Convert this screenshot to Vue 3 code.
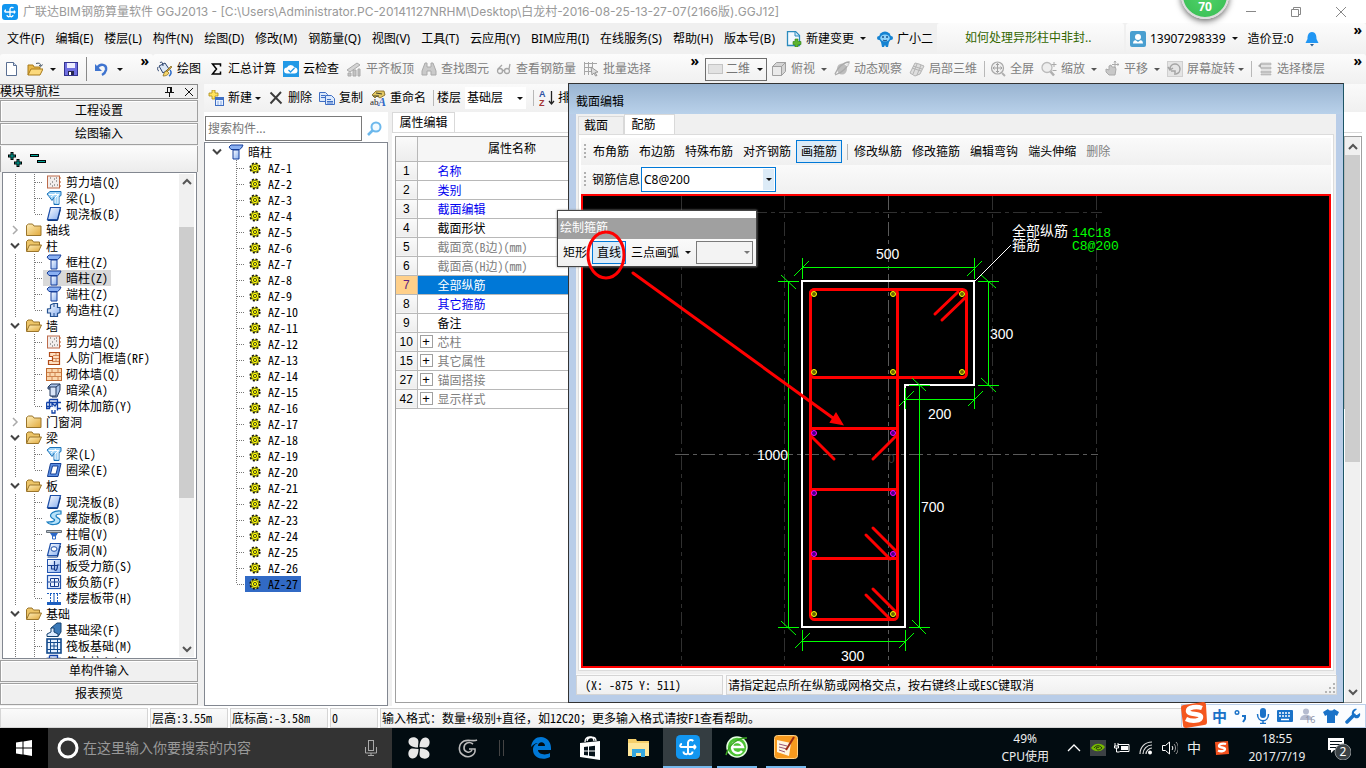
<script setup>
import { ref } from 'vue';

const icons = {
  app: '<rect width="16" height="16" rx="3" fill="#1296f0"/><path d="M8 12.500V5a2 2 0 0 1 3.500-1M3.500 8H13M3.500 8c-1 0-1-2 .5-2M12 6.500L13 8l-1 1.500M5 11c0 2 3 2.500 3 .5M8 11.500c0 2 3 1.500 3-.5" fill="none" stroke="#fff" stroke-width="1.300"/>',
  newDoc: '<path d="M2.500 1.500h7l3 3v10h-10z" fill="#fff" stroke="#5a6f92"/><path d="M9.500 1.500v3h3" fill="#cfdcf0" stroke="#5a6f92"/>',
  open: '<path d="M1 14V4h5l1 2h6v3" fill="#e8b84a" stroke="#a87a1a"/><path d="M1 14l3-6h12l-3 6z" fill="#fbd97c" stroke="#a87a1a"/><path d="M9 2.500c3-1 5 0 5 2.500m-2-1 2 1.500 1.500-2" fill="none" stroke="#456"/>',
  save: '<rect x="1.500" y="1.500" width="13" height="13" fill="#6f6fe0" stroke="#33338f"/><rect x="4" y="2" width="8" height="5" fill="#eef"/><rect x="5" y="10" width="6" height="4" fill="#26264e"/><rect x="6" y="11" width="2" height="3" fill="#fff"/>',
  undo: '<path d="M3 7c3-5 10-4 9 2-.5 2-2 4-4 5" fill="none" stroke="#3f74cf" stroke-width="2.500"/><path d="M1 3v7h7z" fill="#3f74cf"/>',
  paint: '<path d="M2 5l6-3 4 6-6 4z" fill="#dce7f5" stroke="#28406b"/><path d="M3 2c1-2 3-1 3 3M1 6c-1 2 0 4 1 4" fill="none" stroke="#28406b"/><path d="M14 5l1 1-6 6-1-1z" fill="#c7a13c" stroke="#775a10" stroke-width=".6"/><path d="M10 10c-2 0-3 2-4 5 3 0 5-1 6-3z" fill="#f6d76c" stroke="#836515" stroke-width=".7"/><path d="M13 9c2 2 1 5-1 6" fill="none" stroke="#2868c8" stroke-width="1.500"/>',
  sigma: '<path d="M12.500 5.500V3h-8l4 5-4 5h8v-2.500" fill="none" stroke="#000" stroke-width="1.500"/>',
  cloud: '<rect width="16" height="16" fill="#2299e6"/><path d="M4 12.500a3 3 0 0 1 0-6 4 4 0 0 1 7.500 0 3 3 0 0 1 0 6z" fill="#fff"/><path d="M5.500 9l2 2 4-4" fill="none" stroke="#2299e6" stroke-width="1.300"/>',
  align: '<path d="M1 9l10-7 3 2-10 7z" fill="#d4d4d4" stroke="#aaa"/><path d="M2 12h3v3H2zM7 9h3v6H7zM12 8h2v7h-2z" fill="#c4c4c4" stroke="#aaa"/>',
  binoc: '<path d="M4 2h2v4h4V2h2l3 8v4h-5v-4H6v4H1v-4z" fill="#cacaca" stroke="#aaa"/>',
  glasses: '<g fill="none" stroke="#a6a6a6" stroke-width="1.300"><circle cx="4" cy="10" r="2.500"/><circle cx="11" cy="10" r="2.500"/><path d="M6.500 9.500h2M2 8l4-4M13 8l1-5"/></g>',
  grid: '<path d="M1.500 1v13M5.500 1v13M9.500 1v6M1 2.500h13M1 6.500h8M1 10.500h7" stroke="#a6a6a6" fill="none"/><path d="M8 6l7 5-3 .5 2 3-1.500.5-1.500-3-2 2z" fill="#ddd" stroke="#999"/>',
  flat: '<rect x=".5" y="3.500" width="14" height="9" fill="#e2e2e2" stroke="#c4c4c4"/>',
  cube: '<path d="M1.500 5.500h9v9h-9z" fill="#eaeaea" stroke="#a0a0a0"/><path d="M1.500 5.500l4-4h9l-4 4zM10.500 5.500l4-4v9l-4 4z" fill="#d4d4d4" stroke="#a0a0a0"/>',
  orbit: '<ellipse cx="8" cy="8" rx="5" ry="5.500" fill="#bdbdbd"/><path d="M1 13C3 7 10 1 15 1c0 4-7 11-14 13" fill="none" stroke="#aaa" stroke-width="1.300"/><path d="M12 3l3-1-1 4" fill="#ddd"/>',
  local3d: '<path d="M6 2l4 1 5 2-4 8-5 2-5-3z" fill="#dedede" stroke="#b4b4b4"/><path d="M3 7l9 3M8 3L4 13M12 4L8 14M4 5l9 3" fill="none" stroke="#b4b4b4"/>',
  full: '<circle cx="7.500" cy="7" r="6" fill="#eee" stroke="#a8a8a8" stroke-width="1.200"/><path d="M7.500 2.500v9M3 7h9M6 4l1.500-1.500L9 4M6 10l1.500 1.500L9 10M4.500 5.500L3 7l1.500 1.500M10.500 5.500L12 7l-1.500 1.500" fill="none" stroke="#a0a0a0"/><path d="M12 12l3 3" stroke="#b0b0b0" stroke-width="2"/>',
  zoom: '<circle cx="6" cy="6.500" r="5" fill="#eee" stroke="#bbb" stroke-width="1.300"/><path d="M9.500 10.500l3.500 4" stroke="#b0b0b0" stroke-width="2.500"/><path d="M13 1v5M10.500 3.500h5M11.500 9.500h4" stroke="#aaa"/>',
  pan: '<path d="M2 8l3 1V5l2-1 1 2 3 0 1 2-1 6H5l-3-3z" fill="#c8c8c8" stroke="#aaa"/><path d="M11 0v7M8 3.500h7M10 1.500L11 0l1 1.500M13.500 2.500l1.500 1-1.500 1" fill="none" stroke="#aaa"/>',
  rotate: '<rect x=".5" y=".5" width="15" height="15" fill="#e4e4e4" stroke="#cfcfcf"/><path d="M3 8a5 5 0 1 1 6 5M1 6l2 3 3-2M4 10h4v4" fill="none" stroke="#a4a4a4" stroke-width="1.500"/>',
  floors: '<path d="M4 2h10v2H4zM4 6h10v2H4zM4 10h10v2H4zM4 13h10v1H4z" fill="#c8c8c8" stroke="#b4b4b4" stroke-width=".6"/><path d="M1 5l3-3v5z" fill="#a8a8a8"/>',
  docPlus: '<path d="M1.500.500h8l4 4v10h-12z" fill="#f3f9ff" stroke="#2b8bbd" stroke-width="1.300"/><path d="M9 1v4h4" fill="#cfe8fa" stroke="#2b8bbd"/><path d="M9 8h3v2.500h3v3h-3V16H9v-2.500H7v-3h2z" fill="#5cb531" stroke="#2f7e10" stroke-width=".6"/>',
  robot: '<circle cx="8" cy="6.500" r="6" fill="#1583d2"/><rect x="0" y="5" width="16" height="4" rx="2" fill="#1583d2"/><ellipse cx="8" cy="7" rx="4.800" ry="3.500" fill="#8fd3fa"/><path d="M6 5v2M10 5v2" stroke="#124a86" stroke-width="1.400"/><path d="M6 9c1 1 3 1 4 0" stroke="#124a86" fill="none"/><path d="M4 11h8l-1 5H9l-1-2-1 2H5z" fill="#1583d2"/>',
  user: '<rect width="16" height="16" rx="2" fill="#4a9fd0"/><circle cx="8" cy="6" r="3" fill="#fff"/><path d="M3 12.500c0-3 2-4 3-3l2 1.500 2-1.500c1-1 3 0 3 3z" fill="#fff"/>',
  bell: '<path d="M8 1c4 0 4.500 4 4.500 7l2 4h-13l2-4c0-3 .5-7 4.500-7z" fill="#2196f3"/><path d="M6 13h4l-2 2.500z" fill="#2c5f93"/>',
  create: '<path d="M4 0h3v3h3v3H7v3H4V6H1V3h3z" fill="#ffe35e" stroke="#ab8a17" stroke-width=".8"/><rect x="7.500" y="7.500" width="8" height="8" fill="#e8f1ff" stroke="#3f6fc4"/><path d="M8 9h7" stroke="#3f6fc4" stroke-width="2"/><path d="M9 12h2M12 12h2M9 14h2M12 14h2" stroke="#86a9e2"/>',
  remove: '<path d="M2.500 2.500l11 11M13 2L2.500 13.500" stroke="#3b3b3b" stroke-width="1.900"/>',
  copy: '<path d="M.500 2.500h6l2 2v7h-8z" fill="#dce9fb" stroke="#3f6fc4"/><path d="M2 5.500h4M2 7.500h4" stroke="#3f6fc4"/><path d="M6.500 5.500h6l3 3v6h-9z" fill="#dce9fb" stroke="#3f6fc4"/><path d="M8 9.500h4M8 11.500h6M8 13h6" stroke="#3f6fc4"/>',
  rename: '<path d="M2 5l4-4 8 0 1 4-5 3-3-2-2 2z" fill="#e2c763" stroke="#7b6119" stroke-width=".8"/><path d="M3 6h6M6 3l6 1" stroke="#3f3f2b"/><text x="0" y="15" font-size="9" font-family="Liberation Serif" fill="#222">ab</text><text x="8" y="16" font-size="12" font-weight="bold" font-style="italic" font-family="Liberation Serif" fill="#2f69c7">A</text>',
  sort: '<text x="0" y="7" font-size="9" font-weight="bold" font-family="Liberation Sans" fill="#2d51a3">A</text><text x="0" y="16" font-size="9" font-weight="bold" font-family="Liberation Sans" fill="#a33535">Z</text><path d="M12.500 1v12M10 11l2.500 3 2.500-3" fill="none" stroke="#222" stroke-width="1.300"/>',
  search: '<path d="M1 14l5-5" stroke="#6cb8ec" stroke-width="2.600"/><circle cx="9" cy="6" r="4.500" fill="#f2faff" stroke="#6cb8ec" stroke-width="2"/>',
  shearWall: '<rect x="1.500" y="2" width="12" height="12" fill="#f3eeec" stroke="#bd6a4a"/><path d="M4 4h1M8 5h1M6 8h1M10 7h1M4 10h1M8 11h1M11 11h1M6 12h1M10 4h1" stroke="#555"/><path d="M13 4h2M13 8h2M13 12h2" stroke="#bd5a2a"/>',
  beam: '<path d="M1 4l3-2.500h11v4l-2 1v8H8v-7l-2 3-3-4z" fill="#9fd3f7" stroke="#1b72b8"/><path d="M3 4.500h9v9M5 7l5-4M9 13V8l4-4" fill="none" stroke="#fff"/>',
  slab: '<path d="M4.500 1.500h10l-3 12h-10z" fill="url(#gBlue)" stroke="#1d4fa8" stroke-width="1.200"/><path d="M1.500 14.500h10l3-11" fill="none" stroke="#12397f"/>',
  folder: '<path d="M.500 13.500v-10l2-1.500h4l1.500 2h7v9.500z" fill="url(#gFolder)" stroke="#9a752b"/>',
  folderOpen: '<path d="M.500 13V3.500l1.500-1.500h4l1.500 2h6v4" fill="#edc568" stroke="#9a752b"/><path d="M.500 13.500l3-6.500h12l-3 6.500z" fill="url(#gFolder)" stroke="#9a752b"/>',
  column: '<path d="M1 3l2-2h12l-1.500 3-2 1.500H3z" fill="#8ab0f2" stroke="#173f9a"/><path d="M5 6h6v9H5z" fill="url(#gBlue)" stroke="#173f9a"/>',
  structCol: '<path d="M4.500 3l3-1.500h4v4l2.500 0v5l-2.500 1v3h-7v-3.500l-3 0v-4l3-.5z" fill="url(#gBlue)" stroke="#24508f" stroke-width="1.200"/><path d="M8 2v3M8 11v3" stroke="#24508f"/>',
  door: '<path d="M3.500 2.500h10v12h-11v-4h4v-4h-3z" fill="#ffdfbf" stroke="#b14a17" stroke-width="1.200"/><path d="M7 5.500h6M7 8.500h6M6 11.500h7M10 3v3M10 8v3" stroke="#d28a5a"/>',
  brick: '<rect x=".5" y="2.500" width="15" height="12" fill="#fbd7ae" stroke="#bf6a30"/><path d="M1 6.500h14M1 10.500h14M6 3v3M12 3v3M4 7v3M9 7v3M6 11v3M12 11v3" stroke="#cf8450"/>',
  hiddenBeam: '<path d="M2 5l3-3h9v6l-3 7H6V7H2z" fill="#a9c3e9" stroke="#22395f"/><path d="M2 5h8v9H4V5M10 5l4-3" fill="#d8e5f8" stroke="#22395f"/>',
  wallRebar: '<path d="M.500 4.500h11v8M3.500 1.500h8v3M3.500 1.500v9h-3v-6" fill="#dfe9fb" stroke="#1242a8" stroke-width="1.300"/><path d="M6 9V5l3 3 3-4M12 4.500h3M12 10.500h3M6 12v3h3v-3M1 8.500h4" fill="none" stroke="#1242a8" stroke-width="1.300"/>',
  ringBeam: '<path d="M4.500 1.500h10.500l-3 13H1.500z" fill="#5b8ee2" stroke="#153f93"/><path d="M6.500 4h5.500l-2 8H4.500z" fill="#fff" stroke="#153f93"/>',
  spiral: '<path d="M15 1c-7-1-12 3-10 6 1 2 5 2 3 4-1 1-4 1-7 1 3 4 12 3 13-1 1-3-4-3-4-5 0-1 2-2 5-2z" fill="#b7e3fa" stroke="#1b7ec0" stroke-width="1.200"/>',
  cap: '<path d="M.500 4.500h15v2H.500z" fill="#b9c2cc" stroke="#66707a"/><path d="M4 7h8l-2 3H6z" fill="#2c69c8"/><path d="M6.500 10v3h3v-3z" fill="#fff" stroke="#2c69c8"/>',
  hole: '<path d="M4.500 1.500h10l-3 12h-10z" fill="url(#gBlue)" stroke="#1d4fa8" stroke-width="1.200"/><ellipse cx="8" cy="7" rx="3" ry="2.300" fill="#fff" stroke="#1d4fa8"/><path d="M1.500 15h10l3-11" fill="none" stroke="#12397f"/>',
  mainBar: '<rect x="1.500" y="1.500" width="13" height="13" fill="url(#gBlue)" stroke="#2456b0"/><path d="M8.500 3v9M8.500 12c2 1 3-1 3-5h2M2 7.500h9M5.500 7v4h3" fill="none" stroke="#163c8c" stroke-width="1.200"/>',
  negBar: '<rect x="1.500" y="1.500" width="13" height="13" fill="#eaf2ff" stroke="#2456b0" stroke-width="1.200"/><path d="M4.500 7V4.500h8V7M4.500 9v3.500h8V9M8.500 4v9M2 8h12" fill="none" stroke="#163c8c"/>',
  strip: '<path d="M1 13.500h14" stroke="#1c5fc0" stroke-width="3"/><path d="M1 3.500h14" stroke="#1c5fc0" stroke-dasharray="2 1"/><path d="M4.500 4v8M11.500 4v8" stroke="#1c5fc0" stroke-dasharray="2 1"/><path d="M8 4v8" stroke="#1c5fc0"/>',
  footBeam: '<path d="M5 6l6-5h4v9l-3 4.500H8z" fill="#3a79b8" stroke="#14416f"/><path d="M1 14.500v-2.500l4-2V6h3v4l4 2v2.500z" fill="#dcecff" stroke="#14416f"/>',
  raft: '<rect x="1" y="1" width="14" height="14" fill="#e5f1ff" stroke="#134a8c" stroke-width="1.600"/><path d="M4.500 1v14M11.500 1v14M1 4.500h14M1 11.500h14M8 4v8M4 8h8" stroke="#134a8c" fill="none"/>',
  gear: '<circle cx="7" cy="8" r="4.800" fill="#ff0" stroke="#111" stroke-width="1.600" stroke-dasharray="2 1.770"/><circle cx="7" cy="8" r="3.700" fill="#ff0" stroke="#333" stroke-width=".7"/><circle cx="7" cy="8" r="1.600" fill="none" stroke="#222" stroke-width=".8"/>'
};

const menus = ['文件(F)', '编辑(E)', '楼层(L)', '构件(N)', '绘图(D)', '修改(M)', '钢筋量(Q)', '视图(V)', '工具(T)', '云应用(Y)', 'BIM应用(I)', '在线服务(S)', '帮助(H)', '版本号(B)'];

const drawTools = [
  { icon: 'paint', label: '绘图' },
  { icon: 'sigma', label: '汇总计算' },
  { icon: 'cloud', label: '云检查' },
  { icon: 'align', label: '平齐板顶', off: true },
  { icon: 'binoc', label: '查找图元', off: true },
  { icon: 'glasses', label: '查看钢筋量', off: true },
  { icon: 'grid', label: '批量选择', off: true }
];

const viewTools = [
  { icon: 'cube', label: '俯视', drop: true },
  { icon: 'orbit', label: '动态观察' },
  { icon: 'local3d', label: '局部三维', sep: true },
  { icon: 'full', label: '全屏' },
  { icon: 'zoom', label: '缩放', drop: true },
  { icon: 'pan', label: '平移', drop: true },
  { icon: 'rotate', label: '屏幕旋转', drop: true, near: true, sep: true },
  { icon: 'floors', label: '选择楼层' }
];

const componentTools = [
  { icon: 'create', label: '新建', drop: true, near: true },
  { icon: 'remove', label: '删除' },
  { icon: 'copy', label: '复制' },
  { icon: 'rename', label: '重命名' }
];

const leaf = (icon, label, extra = {}) => ({ icon, label, ...extra });
const moduleTree = [
  leaf('shearWall', '剪力墙(Q)'),
  leaf('beam', '梁(L)'),
  leaf('slab', '现浇板(B)', { last: true }),
  { label: '轴线', root: true },
  { label: '柱', root: true, open: true },
  leaf('column', '框柱(Z)'),
  leaf('column', '暗柱(Z)', { selected: true }),
  leaf('column', '端柱(Z)'),
  leaf('structCol', '构造柱(Z)', { last: true }),
  { label: '墙', root: true, open: true },
  leaf('shearWall', '剪力墙(Q)'),
  leaf('door', '人防门框墙(RF)'),
  leaf('brick', '砌体墙(Q)'),
  leaf('hiddenBeam', '暗梁(A)'),
  leaf('wallRebar', '砌体加筋(Y)', { last: true }),
  { label: '门窗洞', root: true },
  { label: '梁', root: true, open: true },
  leaf('beam', '梁(L)'),
  leaf('ringBeam', '圈梁(E)', { last: true }),
  { label: '板', root: true, open: true },
  leaf('slab', '现浇板(B)'),
  leaf('spiral', '螺旋板(B)'),
  leaf('cap', '柱帽(V)'),
  leaf('hole', '板洞(N)'),
  leaf('mainBar', '板受力筋(S)'),
  leaf('negBar', '板负筋(F)'),
  leaf('strip', '楼层板带(H)', { last: true }),
  { label: '基础', root: true, open: true },
  leaf('footBeam', '基础梁(F)'),
  leaf('raft', '筏板基础(M)'),
  leaf('wallRebar', '集水坑(K)')
];

const selectedColumn = ref(27);
const selectedProp = ref(7);

const props = [
  { no: 1, name: '名称', kind: 'key' },
  { no: 2, name: '类别', kind: 'key' },
  { no: 3, name: '截面编辑', kind: 'key' },
  { no: 4, name: '截面形状', kind: '' },
  { no: 5, name: '截面宽(B边)(mm)', kind: 'dim' },
  { no: 6, name: '截面高(H边)(mm)', kind: 'dim' },
  { no: 7, name: '全部纵筋', kind: 'key' },
  { no: 8, name: '其它箍筋', kind: 'key' },
  { no: 9, name: '备注', kind: '' },
  { no: 10, name: '芯柱', kind: 'dim', group: true },
  { no: 15, name: '其它属性', kind: 'dim', group: true },
  { no: 27, name: '锚固搭接', kind: 'dim', group: true },
  { no: 42, name: '显示样式', kind: 'dim', group: true }
];

const search = ref('');
const floor = ref('基础层');
const viewMode = ref('二维');
const rebarInfo = ref('C8@200');
const arcMode = ref('');
const cortana = ref('');

const rebarTools = ['布角筋', '布边筋', '特殊布筋', '对齐钢筋', '画箍筋'];
const editTools = ['修改纵筋', '修改箍筋', '编辑弯钩', '端头伸缩', '删除'];

const bars = [
  [814, 294], [893, 294], [962, 294], [814, 372], [893, 372], [962, 372], [814, 614], [893, 614]
];
const midBars = [[814, 433], [893, 433], [814, 493], [893, 493], [814, 554], [893, 554]];
</script>

<template>
  <div class="desktop">
    <svg class="defs" width="0" height="0" aria-hidden="true">
      <defs>
        <linearGradient id="gBlue" x1="0" y1="0" x2="1" y2="1">
          <stop offset="0" stop-color="#fff" /><stop offset="1" stop-color="#86aef0" />
        </linearGradient>
        <linearGradient id="gFolder" x1="0" y1="0" x2="1" y2="1">
          <stop offset="0" stop-color="#fff0bd" /><stop offset="1" stop-color="#e0a83a" />
        </linearGradient>
      </defs>
    </svg>

    <header class="titlebar">
      <svg class="icon" viewBox="0 0 16 16" v-html="icons.app"></svg>
      <h1 class="title">广联达BIM钢筋算量软件 GGJ2013 - [C:\Users\Administrator.PC-20141127NRHM\Desktop\白龙村-2016-08-25-13-27-07(2166版).GGJ12]</h1>
      <div class="win-buttons">
        <button aria-label="最小化"><svg width="12" height="12"><path d="M1 5.500h10" stroke="#888" /></svg></button>
        <button aria-label="还原"><svg width="12" height="12"><path d="M1.500 3.500h7v7h-7zM3.500 3.500v-2h7v7h-2" fill="none" stroke="#888" /></svg></button>
        <button aria-label="关闭"><svg width="12" height="12"><path d="M1 1l10 10M11 1L1 11" fill="none" stroke="#888" /></svg></button>
      </div>
    </header>

    <nav class="menubar">
      <div class="menu-main">
        <button v-for="m in menus" :key="m">{{ m }}</button>
        <button class="tool menu-extra"><svg class="icon" viewBox="0 0 16 16" v-html="icons.docPlus"></svg>新建变更<i class="caret"></i></button>
        <button class="tool"><svg class="icon" viewBox="0 0 16 16" v-html="icons.robot"></svg>广小二</button>
      </div>
      <a class="menu-tip" href="#">如何处理异形柱中非封..</a>
      <div class="menu-user">
        <button class="tool"><svg class="icon" viewBox="0 0 16 16" v-html="icons.user"></svg>13907298339<i class="caret"></i></button>
        <span class="coins">造价豆:0</span>
        <button class="tool" aria-label="消息"><svg class="icon" viewBox="0 0 16 16" v-html="icons.bell"></svg></button>
        <span class="more">»</span>
      </div>
    </nav>

    <div class="toolbar">
      <div class="band band-file">
        <button aria-label="新建"><svg class="icon" viewBox="0 0 16 16" v-html="icons.newDoc"></svg></button>
        <button class="tool" aria-label="打开"><svg class="icon" viewBox="0 0 16 16" v-html="icons.open"></svg><i class="caret"></i></button>
        <button aria-label="保存"><svg class="icon" viewBox="0 0 16 16" v-html="icons.save"></svg></button>
        <span class="sep dark"></span>
        <button class="tool" aria-label="撤销"><svg class="icon" viewBox="0 0 16 16" v-html="icons.undo"></svg><i class="caret"></i></button>
        <span class="more">»</span>
      </div>
      <div class="band band-draw">
        <button v-for="t in drawTools" :key="t.label" class="tool" :class="{ off: t.off }">
          <svg class="icon" viewBox="0 0 16 16" v-html="icons[t.icon]"></svg>{{ t.label }}
        </button>
        <span class="more">»</span>
      </div>
      <div class="band band-view">
        <label class="view-mode">
          <svg class="icon" viewBox="0 0 16 16" v-html="icons.flat"></svg>
          <select v-model="viewMode" aria-label="视图模式"><option>二维</option><option>三维</option></select>
          <i class="caret"></i>
        </label>
        <template v-for="t in viewTools" :key="t.label">
          <button class="tool off">
            <svg class="icon" viewBox="0 0 16 16" v-html="icons[t.icon]"></svg>{{ t.label }}<i v-if="t.drop" class="caret" :class="{ near: t.near }"></i>
          </button>
          <span v-if="t.sep" class="sep"></span>
        </template>
        <span class="more">»</span>
      </div>
    </div>

    <main class="workspace">
      <aside class="nav-panel">
        <div class="nav-head">
          <h2>模块导航栏</h2>
          <button aria-label="固定"><svg width="9" height="10"><path d="M2.500 0v5M2 .500h4.500M0 5.500h9M4.500 6v4M5.500 0v5M6.500 0v5" stroke="#111" fill="none" /></svg></button>
          <button aria-label="关闭"><svg width="9" height="10"><path d="M1 1l8 8M9 1L1 9" stroke="#111" fill="none" /></svg></button>
        </div>
        <button class="nav-btn">工程设置</button>
        <button class="nav-btn">绘图输入</button>
        <div class="nav-tools">
          <button aria-label="全部展开"><svg width="18" height="16"><path d="M6 1v8M2 5h8M12 8v8M8 12h8" stroke="#000" stroke-width="3" /><path d="M6 2v6M3 5h6M12 9v6M9 12h6" stroke="#00a89c" stroke-width="1" /></svg></button>
          <button aria-label="全部折叠"><svg width="18" height="16"><path d="M0 4.500h9M7 10.500h9" stroke="#000" stroke-width="3" /><path d="M1 4.500h7M8 10.500h7" stroke="#00a89c" stroke-width="1" /></svg></button>
        </div>
        <div class="tree-box">
          <ul class="tree">
            <li v-for="(n, i) in moduleTree" :key="i" :class="{ selected: n.selected }">
              <svg v-if="n.root" width="20" height="16">
                <path v-if="n.open" d="M8 5.500l4 4 4-4" fill="none" stroke="#444" stroke-width="2" />
                <path v-else d="M10 4l4 4-4 4" fill="none" stroke="#aaa" stroke-width="1.500" />
              </svg>
              <svg v-else width="40" height="16" class="dots">
                <path d="M12.500 0v16" /><path :d="n.last ? 'M31.500 0v8' : 'M31.500 0v16'" /><path d="M32 8.500h8" />
              </svg>
              <span class="node"><svg class="icon" viewBox="0 0 16 16" v-html="icons[n.icon || (n.open ? 'folderOpen' : 'folder')]"></svg>{{ n.label }}</span>
            </li>
          </ul>
          <div class="scroll nav-scroll">
            <svg width="15" height="16"><path d="M4 10l4-4 4 4" fill="none" stroke="#555" stroke-width="2" /></svg>
            <div class="scroll-rail"><div class="thumb"></div></div>
            <svg width="15" height="16"><path d="M4 6l4 4 4-4" fill="none" stroke="#555" stroke-width="2" /></svg>
          </div>
        </div>
        <button class="nav-btn">单构件输入</button>
        <button class="nav-btn">报表预览</button>
      </aside>

      <section class="main-area">
        <div class="comp-bar">
          <button v-for="t in componentTools" :key="t.label" class="tool">
            <svg class="icon" viewBox="0 0 16 16" v-html="icons[t.icon]"></svg>{{ t.label }}<i v-if="t.drop" class="caret near"></i>
          </button>
          <span class="sep"></span>
          <label class="floor">楼层
            <span class="floor-box"><select v-model="floor"><option>基础层</option><option>首层</option></select><i class="caret"></i></span>
          </label>
          <span class="sep"></span>
          <button class="tool sorter"><svg class="icon" viewBox="0 0 16 16" v-html="icons.sort"></svg>排序</button>
        </div>

        <div class="main-cols">
          <div class="comp-panel">
            <div class="search-row">
              <input v-model="search" type="text" placeholder="搜索构件..." aria-label="搜索构件">
              <button aria-label="搜索"><svg class="icon" viewBox="0 0 16 16" v-html="icons.search"></svg></button>
            </div>
            <ul class="tree comp-tree">
              <li>
                <svg width="20" height="16"><path d="M8 5.500l4 4 4-4" fill="none" stroke="#444" stroke-width="2" /></svg>
                <span class="node"><svg class="icon" viewBox="0 0 16 16" v-html="icons.column"></svg>暗柱</span>
              </li>
              <li v-for="k in 27" :key="k" :class="{ active: k === selectedColumn }" @click="selectedColumn = k">
                <svg width="40" height="16" class="dots">
                  <path :d="k === 27 ? 'M31.5 0v8' : 'M31.5 0v16'" /><path d="M32 8.500h8" />
                </svg>
                <span class="node"><svg class="icon" viewBox="0 0 16 16" v-html="icons.gear"></svg>AZ-{{ k }}</span>
              </li>
            </ul>
          </div>

          <div class="prop-panel">
            <div class="prop-tabs"><button class="prop-tab">属性编辑</button></div>
            <div class="prop-page">
              <table class="prop-table">
                <thead><tr><th class="no"></th><th class="name-head">属性名称</th><th></th></tr></thead>
                <tbody>
                  <tr v-for="p in props" :key="p.no" :class="{ current: p.no === selectedProp }" @click="selectedProp = p.no">
                    <th class="no">{{ p.no }}</th>
                    <td class="name" :class="p.kind"><span class="cell"><span class="toggle"><button v-if="p.group" class="plus" aria-label="展开">+</button></span>{{ p.name }}</span></td>
                    <td></td>
                  </tr>
                </tbody>
              </table>
              <div class="scroll prop-scroll">
                <svg width="15" height="18"><path d="M4 12l4-4 4 4" fill="none" stroke="#555" stroke-width="2" /></svg>
                <div class="scroll-rail"><div class="thumb"></div></div>
                <svg width="15" height="18"><path d="M4 6l4 4 4-4" fill="none" stroke="#555" stroke-width="2" /></svg>
              </div>
            </div>
          </div>
        </div>
      </section>
    </main>

    <footer class="statusbar">
      <span class="st-blank"></span>
      <span class="st-a">层高:3.55m</span>
      <span class="st-b">底标高:-3.58m</span>
      <span class="st-c">0</span>
      <span class="st-msg">输入格式：数量+级别+直径，如12C20；更多输入格式请按F1查看帮助。</span>
    </footer>

    <div class="taskbar">
      <button class="start" aria-label="开始"><svg width="16" height="16"><path d="M0 2.500l6.500-1v6H0zM7.500 1.400L16 0v7.500H7.500zM0 8.500h6.500v6L0 13.500zM7.500 8.500H16V16l-8.500-1.400z" fill="#fff" /></svg></button>
      <label class="cortana">
        <svg width="22" height="22"><circle cx="11" cy="11" r="9" fill="none" stroke="#fff" stroke-width="3" /></svg>
        <input v-model="cortana" type="text" placeholder="在这里输入你要搜索的内容" aria-label="搜索">
        <svg width="14" height="18"><rect x="4.500" y="1.500" width="5" height="10" fill="none" stroke="#aaa" /><path d="M1.500 8v6h11V8M7 14v3M4 16.500h6" fill="none" stroke="#aaa" /></svg>
      </label>
      <div class="apps">
        <button aria-label="应用">
          <svg width="24" height="24"><g fill="#e8e8e8"><path id="petal" d="M11 11.500C5 11.500 1 9 1.500 5c.5-4 6-4.500 8.500-2.500 2.500 2 1 5 1 9z" /><use href="#petal" transform="rotate(90 12 12)" /><use href="#petal" transform="rotate(180 12 12)" /><use href="#petal" transform="rotate(270 12 12)" /></g></svg>
        </button>
        <button aria-label="游戏">
          <svg width="24" height="24"><path d="M21 4c-4 2-8-1-13 1-6 3-6 11-1 14 6 4 13 0 12-6h-6M17 8c-4-3-9-1-9 4 0 4 6 6 8 2" fill="none" stroke="#bbb" stroke-width="1.600" /></svg>
        </button>
        <span class="app-sep"></span>
        <button aria-label="Edge">
          <svg width="24" height="24"><path d="M2 11C3 4 7 1 12 1c6 0 10 5 10 11v2H9c0 4 7 6 12 3v4c-7 4-17 1-17-7 0-4 2-6 5-7-3 0-5 2-7 4zm7-1h7c0-5-7-5-7 0z" fill="#0078d7" /></svg>
        </button>
        <button aria-label="应用商店">
          <svg width="24" height="24"><path d="M2 7l20-2v19L2 21z" fill="#fff" /><path d="M7 6c0-6 9-7 9-1M9 5c1-5 9-5 9 0" fill="none" stroke="#fff" stroke-width="1.300" /><path d="M6 11l4-.5v4H6zM11 10.400l6-.6v4.700h-6zM6 15.500h4v4l-4-.5zM11 15.500h6v5l-6-.8z" fill="#06121a" /></svg>
        </button>
        <button aria-label="文件资源管理器">
          <svg width="24" height="24"><path d="M1 3h8l1 2h12v15H1z" fill="#f5cf6a" /><path d="M1 7h21v13H1z" fill="#ffe79a" /><path d="M5 21v-8h13v8h-4v-4H9v4z" fill="#35a7e0" /></svg>
        </button>
        <button class="active wide" aria-label="GGJ2013">
          <svg width="24" height="24" viewBox="0 0 16 16" v-html="icons.app"></svg>
        </button>
        <button class="running" aria-label="浏览器">
          <svg width="24" height="24"><circle cx="12" cy="12" r="10" fill="#4cc234" stroke="#e4ffe0" stroke-width="1.500" /><path d="M17 16c-3 4-10 2-10-4s9-7 11 0H8" fill="none" stroke="#fff" stroke-width="2.400" /><path d="M1 20C4 9 14 2 22 3" fill="none" stroke="#3aa621" stroke-width="1.500" /></svg>
        </button>
        <button class="running" aria-label="便笺">
          <svg width="24" height="24"><rect x=".5" y=".5" width="23" height="23" rx="3" fill="#f79a1e" stroke="#ffd287" /><path d="M3 5l14 3-2 13-12-4z" fill="#fff6df" /><path d="M5 9l8 2M5 12l8 2M5 15l6 2" stroke="#957" /><path d="M20 2l-8 13" stroke="#9b2b12" stroke-width="2" /></svg>
        </button>
      </div>
      <div class="cpu"><span>49%</span><span>CPU使用</span></div>
      <div class="tray">
        <svg width="16" height="16"><path d="M2 11l6-6 6 6" fill="none" stroke="#fff" stroke-width="1.300" /></svg>
        <svg width="16" height="16"><rect width="16" height="16" fill="#3c4144" /><path d="M1 8c3-5 10-6 14-1-3 5-10 6-14 1z" fill="#76b900" /><path d="M4 8c2-3 6-3 8 0-2 2-5 3-6 0 1-1 3-1 3 0" fill="none" stroke="#26310f" /></svg>
        <svg width="16" height="16"><path d="M4 4.500h11v7H5.500M1 3v3M4 3v3M.500 6h4v2h-4zM2.500 8v4h3" fill="none" stroke="#fff" /><rect x="7" y="6" width="7" height="4" fill="#fff" /></svg>
        <svg width="16" height="16"><path d="M2 14C2 7 7 2 14 2M5 14c0-5 4-9 9-9M8 14c0-3 3-6 6-6" fill="none" stroke="#ddd" stroke-width="1.200" /><circle cx="12" cy="12.500" r="2" fill="#fff" /></svg>
        <svg width="16" height="16"><path d="M.500 5.500h3l4-3.500v12l-4-3.500h-3z" fill="none" stroke="#fff" /><path d="M10 6c1 1 1 3 0 4" fill="none" stroke="#fff" /><path d="M12 4c2 2 2 6 0 8M14 2c3 3 3 9 0 12" fill="none" stroke="#999" /></svg>
        <span class="ime">中</span>
        <svg width="16" height="16"><path d="M1 2l13-1 1 13-13 1z" fill="#f4511e" /><path d="M12 4c-3-1-7 0-7 2s6 1 6 3-4 3-7 1.500" fill="none" stroke="#fff" stroke-width="2.300" /></svg>
      </div>
      <div class="clock"><span>18:55</span><span>2017/7/19</span></div>
      <button class="notice" aria-label="通知">
        <svg width="24" height="24"><path d="M1 2h16v12H7l-3 3v-3H1z" fill="#fff" /><path d="M3 5.500h12M3 8.500h12M3 11.500h8" stroke="#06121a" /><circle cx="16" cy="16" r="8" fill="#3b4245" stroke="#8a8f92" /><text x="16" y="20" text-anchor="middle" font-size="12" fill="#fff">2</text></svg>
      </button>
    </div>

    <section class="dialog" aria-label="截面编辑">
      <h2 class="dialog-title">截面编辑</h2>
      <div class="dialog-body">
        <div class="dialog-tabs"><button>截面</button><button class="on">配筋</button></div>
        <div class="dialog-page">
          <div class="strip">
            <i class="grip"></i>
            <button v-for="t in rebarTools" :key="t" :class="{ pressed: t === '画箍筋' }">{{ t }}</button>
            <span class="sep"></span>
            <button v-for="t in editTools" :key="t" :class="{ off: t === '删除' }">{{ t }}</button>
          </div>
          <div class="strip info">
            <i class="grip"></i>
            <label for="rebar">钢筋信息</label>
            <span class="combo"><select id="rebar" v-model="rebarInfo"><option>C8@200</option><option>C10@200</option></select><span class="combo-btn"><i class="caret"></i></span></span>
          </div>
          <svg class="canvas">
            <g transform="translate(-583 -196)">
              <g fill="none" stroke="#303030" stroke-dasharray="14 4 4 4">
                <path d="M681.500 196v470M784.500 196v470M992.500 196v470M1096.500 196v470M675 212.500h427" />
                <path d="M888.500 196v470M675 454.500h423" stroke="#5a5a5a" />
              </g>
              <text x="888" y="463" class="origin">0</text>
              <path d="M802 281h172v104h-69v242h-103z" fill="none" stroke="#fff" stroke-width="2" />
              <path d="M975 281l36-36" stroke="#fff" />
              <g fill="none" stroke="#f00" stroke-width="3" stroke-linecap="round">
                <rect x="810.500" y="289.500" width="156" height="88" rx="4" />
                <rect x="810.500" y="289.500" width="87" height="330" rx="4" />
                <path d="M812 428.500h84M811 489.500h86M811 558.500h86" />
                <path d="M958 292l-23 22M966 297l-24 23M811 436l23 23M896 436l-23 23" />
                <path d="M866 535l24 24M873 528l24 24M866 595l24 24M873 589l24 24" />
              </g>
              <g stroke="#ff0" fill="#660">
                <circle v-for="(b, i) in bars" :key="i" :cx="b[0]" :cy="b[1]" r="2.500" />
              </g>
              <g stroke="#f0f" fill="#408">
                <circle v-for="(b, i) in midBars" :key="i" :cx="b[0]" :cy="b[1]" r="2.500" />
              </g>
              <g fill="none" stroke="#0f0">
                <path d="M802 267.500h173M802.500 258v21M974.500 258v21M809 261l-15 15M982 261l-15 15" />
                <path d="M788.500 281v347M778 281.500h21M778 627.500h21M781 275l15 14M781 621l15 14" />
                <path d="M988.500 281v105M978 281.500h21M978 385.500h21M981 275l15 13M981 378l15 14" />
                <path d="M919.500 385v243M909 385.500h21M909 627.500h21M912 378l14 13M912 620l14 14" />
                <path d="M905 399.500h70M905.500 388v21M974.500 388v21M914 391l-15 15M983 391l-15 15" />
                <path d="M802 641.500h103M802.500 630v21M905.500 630v21M810 633l-15 15M914 633l-15 15" />
              </g>
              <g class="dims">
                <text x="876" y="259">500</text>
                <text x="990" y="339">300</text>
                <text x="928" y="419">200</text>
                <text x="921" y="512">700</text>
                <text x="757" y="460">1000</text>
                <text x="841" y="661">300</text>
              </g>
              <g class="notes">
                <text x="1012" y="236">全部纵筋</text>
                <text x="1012" y="250">箍筋</text>
              </g>
              <g class="specs">
                <text x="1072" y="237">14C18</text>
                <text x="1072" y="250">C8@200</text>
              </g>
            </g>
          </svg>
        </div>
        <div class="dialog-status">
          <span class="coords">(X: -875 Y: 511)</span>
          <span class="hint">请指定起点所在纵筋或网格交点，按右键终止或ESC键取消</span>
          <svg width="12" height="12"><path d="M9 1h2M9 5h2M5 5h2M9 9h2M5 9h2M1 9h2" stroke="#b5b5b5" stroke-width="2" /></svg>
        </div>
      </div>
    </section>

    <section class="floater" aria-label="绘制箍筋">
      <h2>绘制箍筋</h2>
      <div class="floater-tools">
        <button>矩形</button>
        <button class="pressed">直线</button>
        <button class="tool">三点画弧<i class="caret"></i></button>
        <span class="combo plain"><select v-model="arcMode" aria-label="画弧方式"><option value=""></option><option>顺时针</option></select><i class="caret"></i></span>
      </div>
    </section>

    <svg class="markup" width="270" height="210" aria-hidden="true">
      <ellipse cx="21" cy="30" rx="18" ry="23" fill="none" stroke="#f00" stroke-width="3" />
      <path d="M48 48l200 145" stroke="#f00" stroke-width="3" stroke-linecap="round" />
      <path d="M257 199l-11-2 5-8z" fill="#f00" stroke="#f00" stroke-width="2" />
    </svg>

    <div class="ime-bar">
      <svg class="sogou" width="28" height="28"><path d="M4 4l19-3c2 0 3 1 3 3l1 17c0 2-1 3-3 3L6 27c-2 0-3-1-3-3L1 7c0-2 1-3 3-3z" fill="#f4571f" /><path d="M22 7c-5-2-14-1-14 3s13 2 13 6-9 5-15 2" fill="none" stroke="#fff" stroke-width="4.500" /></svg>
      <span class="ime-zh">中</span>
      <svg width="16" height="16"><circle cx="4" cy="4.500" r="1.800" fill="none" stroke="#1a72c8" stroke-width="1.400" /><path d="M9 8h3v3l-2 3" fill="none" stroke="#1a72c8" stroke-width="2" /></svg>
      <svg width="16" height="16"><rect x="5" y="0" width="6" height="10" rx="3" fill="#1a72c8" /><path d="M2.500 6c0 9 11 9 11 0M8 12v4M5 15.500h6" fill="none" stroke="#1a72c8" stroke-width="1.500" /></svg>
      <svg width="16" height="16"><rect y="2" width="16" height="12" rx="1" fill="#1a72c8" /><path d="M2 5h12M2 8h12" stroke="#fff" stroke-width="1.500" stroke-dasharray="2 1" /><path d="M4 11.500h8" stroke="#fff" stroke-width="1.500" /></svg>
      <svg width="18" height="16"><circle cx="7" cy="3.500" r="3" fill="#b5bcd0" /><path d="M1 12c0-7 12-7 12 0z" fill="#b5bcd0" /><text x="6" y="15" font-size="9" fill="#8d94ab">16</text></svg>
      <svg width="16" height="16"><path d="M5 1c1 2 5 2 6 0l5 3-2 4-2-1v8H4V7L2 8 0 4z" fill="#1a72c8" /></svg>
      <svg width="16" height="16"><path d="M2 14l7-7" stroke="#1a72c8" stroke-width="3.500" stroke-linecap="round" /><path d="M12 1L9 4l0 3h3l3-2c1 4-2 6-5 5L7 7c-1-4 2-7 5-6z" fill="#1a72c8" /></svg>
    </div>

    <div class="speed-ball">70</div>
  </div>
</template>

<style>
body {
  margin: 0;
  overflow: hidden;
}
</style>

<style scoped>
.desktop {
  position: relative;
  display: flex;
  flex-direction: column;
  height: 100vh;
  overflow: hidden;
  background: #f0f0f0;
  font: 12px/16px "Noto Sans", "Noto Sans CJK SC", sans-serif;
  color: #000;
  white-space: nowrap;
}

.desktop * {
  box-sizing: border-box;
}

.defs {
  position: absolute;
}

button,
select,
input {
  margin: 0;
  padding: 0;
  border: 0;
  background: none;
  font: inherit;
  color: inherit;
  white-space: nowrap;
}

select {
  appearance: none;
  outline: none;
}

h1,
h2 {
  margin: 0;
  font: inherit;
}

svg {
  display: block;
  flex: none;
}

.icon {
  width: 16px;
  height: 16px;
}

.tool {
  display: flex;
  align-items: center;
  gap: 4px;
}

.off {
  color: #808080;
}

.caret {
  flex: none;
  width: 6px;
  border: 3px solid transparent;
  border-top-color: #111;
  border-bottom: 0;
  margin-left: 2px;
}

.off .caret {
  border-top-color: #555;
}

.caret.near {
  margin-left: -1px;
}

.sep {
  flex: none;
  width: 1px;
  height: 16px;
  margin-right: -2px;
  background: #b8b8b8;
}

.more {
  margin-left: auto;
  align-self: flex-start;
  font-size: 14px;
  line-height: 14px;
  font-weight: 700;
}

/* title and menu */
.titlebar {
  display: flex;
  align-items: center;
  gap: 5px;
  height: 23px;
  padding: 0 19px 0 2px;
  background: #fff;
  color: #999;
  font-family: Inter, "Noto Sans CJK SC", sans-serif;
}

.title {
  flex: 1;
}

.win-buttons {
  display: flex;
  gap: 33px;
}

.menubar {
  display: flex;
  align-items: stretch;
  height: 31px;
  gap: 2px;
}

.menu-main {
  display: flex;
  align-items: center;
  gap: 11px;
  width: 935px;
  padding-left: 7px;
}

.menu-tip,
.menu-user,
.band {
  background: linear-gradient(#fcfcfc, #f0f0f0);
  border-radius: 3px;
}

.menu-tip {
  width: 187px;
  padding-left: 28px;
  line-height: 29px;
  color: #336600;
  text-decoration: none;
}

.menu-user {
  display: flex;
  flex: 1;
  align-items: center;
  gap: 10px;
  padding: 0 4px;
}

.toolbar {
  display: flex;
  height: 30px;
}

.band {
  display: flex;
  align-items: center;
  gap: 7px;
  padding: 0 4px;
}

.band-file {
  width: 153px;
}

.band-file .tool {
  gap: 5px;
}

.sep.dark {
  height: 24px;
  margin-right: 0;
  background: #888;
}

.band-draw {
  width: 550px;
}

.band-view {
  flex: 1;
  padding-left: 2px;
}

.view-mode {
  display: flex;
  align-items: center;
  width: 62px;
  height: 23px;
  margin-right: -3px;
  padding: 0 3px 0 2px;
  gap: 2px;
  border: 1px solid #6d6d6d;
  color: #777;
}

.view-mode select {
  width: 30px;
}

/* workspace */
.workspace {
  display: flex;
  flex: 1;
  min-height: 0;
}

.nav-panel {
  display: flex;
  flex-direction: column;
  width: 198px;
  margin-right: 6px;
}

.nav-head {
  display: flex;
  align-items: center;
  height: 15px;
  margin-bottom: 1px;
  padding-right: 4px;
  gap: 10px;
  border: 1px solid #8a8a8a;
  border-left: 0;
}

.nav-head h2 {
  flex: 1;
}

.nav-btn {
  flex: none;
  height: 22px;
  margin-bottom: 1px;
  border: 1px solid #a0a0a0;
  background: #f0f0f0;
  box-shadow: inset 1px 1px #fff;
}

.nav-tools {
  display: flex;
  align-items: center;
  gap: 6px;
  height: 26px;
  padding-left: 5px;
  border-left: 1px solid #a0a0a0;
  border-right: 1px solid #a0a0a0;
  background: linear-gradient(#fcfcfc, #ececec);
}

.tree-box {
  display: flex;
  flex: 1 1 0;
  min-height: 0;
  margin: 0 1px 1px 2px;
  overflow: hidden;
  border: 1px solid #828790;
  background: #fff;
}

.tree {
  flex: 1;
  margin: 0;
  padding: 1px 0 0;
  list-style: none;
  font-family: "Noto Sans Mono CJK SC", "Liberation Serif", "Noto Sans CJK SC", serif;
}

.tree li {
  display: flex;
  height: 16px;
}

.node {
  display: flex;
  align-items: center;
  gap: 4px;
  height: 16px;
  padding: 0 3px;
}

.selected .node {
  background: #d9d9d9;
}

.active .node {
  background: #316ac5;
}

.dots {
  stroke: #777;
  stroke-dasharray: 1 1;
}

.scroll {
  display: flex;
  flex-direction: column;
  flex: none;
  width: 15px;
  background: #f0f0f0;
}

.scroll-rail {
  flex: 1;
}

.thumb {
  background: #cdcdcd;
}

.nav-scroll {
  margin: 1px 2px 1px 0;
}

.nav-scroll .thumb {
  height: 60%;
  margin-top: 37px;
}

.main-area {
  display: flex;
  flex: 1;
  flex-direction: column;
  min-width: 0;
}

.comp-bar {
  display: flex;
  align-items: center;
  gap: 7px;
  height: 28px;
  padding-left: 4px;
  background: linear-gradient(#fafafa, #f0f0f0);
}

.sorter {
  gap: 3px;
}

.floor {
  display: flex;
  align-items: center;
  gap: 6px;
  margin-left: -2px;
}

.floor-box {
  display: flex;
  align-items: center;
  width: 61px;
  height: 22px;
  margin-left: -2px;
  padding: 0 3px 0 2px;
  background: #fff;
}

.floor-box select {
  flex: 1;
  width: 40px;
}

.main-cols {
  display: flex;
  flex: 1;
  min-height: 0;
}

.comp-panel {
  display: flex;
  flex-direction: column;
  width: 184px;
  margin-right: 4px;
  background: #fff;
}

.search-row {
  display: flex;
  align-items: center;
  gap: 5px;
  height: 30px;
  padding: 4px 0 1px 1px;
}

.search-row input {
  width: 157px;
  height: 25px;
  padding: 0 2px;
  border: 1px solid #7a7a7a;
}

.search-row input::placeholder {
  color: #777;
  opacity: 1;
}

.comp-tree {
  border: 1px solid #828790;
  background: #fff;
}

.prop-panel {
  display: flex;
  flex: 1;
  flex-direction: column;
  padding-right: 4px;
  background: #fff;
}

.prop-tabs {
  display: flex;
  height: 21px;
  border-bottom: 1px solid #d9d9d9;
}

.prop-tab {
  width: 63px;
  border: 1px solid #d9d9d9;
  border-bottom: 0;
  background: #fff;
}

.prop-page {
  display: flex;
  flex: 1;
  align-items: flex-start;
  margin: 3px 0 3px 3px;
  border: 1px solid #a0a0a0;
}

.prop-table {
  flex: 1;
  border-collapse: collapse;
  table-layout: fixed;
}

.prop-table th,
.prop-table td {
  height: 19px;
  padding: 0;
  border-bottom: 1px solid #b8b8b8;
  border-right: 1px solid #b8b8b8;
  font-weight: 400;
  line-height: 18px;
}

.prop-table thead th {
  height: 24px;
  background: #f6f6f6;
}

.prop-table .no {
  width: 21px;
  background: linear-gradient(#fafafa, #ededed);
  text-align: center;
  font-family: "Liberation Sans", sans-serif;
}

.name-head {
  width: 190px;
}

.cell {
  display: flex;
  align-items: center;
  height: 18px;
  font-family: "Noto Sans Mono CJK SC", "Liberation Serif", "Noto Sans CJK SC", serif;
}

.toggle {
  width: 20px;
  padding-left: 2px;
}

.plus {
  display: block;
  width: 13px;
  height: 13px;
  border: 1px solid #a0a0a0;
  background: #fff;
  color: #000;
  font: 13px/11px "Liberation Sans", sans-serif;
}

.key {
  color: #0000f0;
}

.dim {
  color: #808080;
}

.current td {
  background: #0078d7;
  color: #fff;
}

.prop-table .current .no {
  background: #ffd08a;
  color: #602080;
}

.prop-scroll {
  align-self: stretch;
  margin-right: 1px;
}

.prop-scroll .thumb {
  height: 58%;
}

/* status bar */
.statusbar {
  display: flex;
  gap: 2px;
  height: 22px;
  padding-top: 2px;
  background: #fff;
  font-family: "Noto Sans Mono CJK SC", "Liberation Sans", "Noto Sans CJK SC", sans-serif;
}

.statusbar span,
.dialog-status span {
  padding-left: 1px;
  border: 1px solid #d5d5d5;
  background: linear-gradient(#fafafa, #f0f0f0);
  line-height: 18px;
}

.st-blank {
  width: 148px;
}

.st-a {
  width: 78px;
}

.st-b {
  width: 98px;
}

.st-c {
  width: 48px;
}

.st-msg {
  flex: 1;
}

/* taskbar */
.taskbar {
  display: flex;
  flex: none;
  align-items: stretch;
  height: 40px;
  background: #020c11;
  color: #eee;
}

.start {
  display: grid;
  place-items: center;
  width: 48px;
  background: #000;
}

.cortana {
  display: flex;
  align-items: center;
  gap: 4px;
  width: 344px;
  padding: 0 14px 0 9px;
  background: #333;
}

.cortana input {
  flex: 1;
  font-size: 14px;
  line-height: 20px;
}

.cortana input::placeholder {
  color: #999;
  opacity: 1;
}

.apps {
  display: flex;
  flex: 1;
  padding-left: 2px;
}

.apps button {
  display: grid;
  place-items: center;
  width: 49px;
}

.app-sep {
  align-self: center;
  width: 5px;
  height: 16px;
  margin: 0 12px 0 7px;
  border: 1px solid #444;
  border-width: 0 1px;
}

.apps .active {
  background: #343d41;
}

.apps .active,
.apps .running {
  border-bottom: 2px solid #76b9ed;
}

.apps .running {
  width: 40px;
  margin: 0 0 0 5px;
}

.apps .running + .running {
  margin-left: 9px;
}

.cpu,
.clock {
  display: flex;
  flex-direction: column;
  justify-content: center;
  align-items: center;
  line-height: 18px;
}

.cpu {
  margin-right: 17px;
}

.tray {
  display: flex;
  align-items: center;
  gap: 8px;
}

.ime {
  width: 16px;
  margin-right: 4px;
  text-align: center;
  font-size: 14px;
}

.clock {
  width: 70px;
  margin: 0 13px 0 12px;
}

.notice {
  display: grid;
  place-items: center;
  width: 28px;
  margin-right: 13px;
}

/* section editor window */
.dialog {
  position: absolute;
  left: 568px;
  right: 22px;
  top: 83px;
  bottom: 65px;
  display: flex;
  flex-direction: column;
  padding: 0 7px 7px;
  border: 1px solid #333;
  border-right-color: #1d5566;
  background: #b9cde8;
}

.dialog-title {
  height: 30px;
  margin: 0 -7px;
  padding-left: 7px;
  line-height: 36px;
  background: linear-gradient(#99b4d1, #b9d1ea);
}

.dialog-body {
  display: flex;
  flex: 1;
  flex-direction: column;
  min-height: 0;
  background: #f0f0f0;
}

.dialog-tabs {
  display: flex;
  align-items: flex-end;
  height: 20px;
  padding-left: 2px;
}

.dialog-tabs button {
  width: 46px;
  height: 18px;
  padding-right: 10px;
  border: 1px solid #d9d9d9;
  border-bottom: 0;
}

.dialog-tabs .on {
  width: 51px;
  height: 20px;
  padding-right: 12px;
  background: #fff;
}

.dialog-page {
  display: flex;
  flex: 1;
  flex-direction: column;
  min-height: 0;
  margin: 0 2px 3px;
  padding: 3px 2px 2px;
  border: 1px solid #dcdcdc;
  background: #fff;
}

.strip {
  display: flex;
  align-items: center;
  gap: 10px;
  height: 27px;
  padding-left: 3px;
  background: linear-gradient(#fafafa, #f0f0f0);
}

.strip .sep {
  margin: 0 -4px 0 -5px;
}

.grip {
  width: 2px;
  height: 15px;
  margin-right: -3px;
  background: repeating-linear-gradient(#b0b0b0 0 2px, transparent 2px 4px);
}

.pressed {
  height: 23px;
  margin: 0 -5px;
  padding: 0 4px;
  border: 1px solid #0078d7;
  background: #dcebf7;
}

.strip .pressed {
  margin-right: 0;
}

.info {
  gap: 9px;
  height: 29px;
}

.combo {
  display: flex;
  align-items: center;
  width: 135px;
  height: 25px;
  margin-left: -8px;
  padding: 1px;
  border: 1px solid #0078d7;
  background: #fff;
}

.combo select {
  flex: 1;
  min-width: 0;
  padding-left: 1px;
}

.combo-btn {
  display: grid;
  place-items: center;
  width: 11px;
  height: 100%;
  background: #dcebf7;
}

.combo-btn .caret {
  margin: 0;
}

.canvas {
  flex: 1;
  width: 100%;
  min-height: 0;
  border: 2px solid #f00;
  background: #000;
}

.dims {
  fill: #fff;
  font: 14px "Liberation Sans", sans-serif;
}

.origin {
  fill: #3a3a3a;
  font: 12px "Liberation Sans", sans-serif;
}

.notes {
  fill: #fff;
  font: 14px "Noto Sans CJK SC", sans-serif;
}

.specs {
  fill: #0f0;
  font: 13px "Liberation Mono", monospace;
}

.dialog-status {
  display: flex;
  align-items: flex-end;
  gap: 3px;
  height: 21px;
  background: #fafafa;
  font-family: "Noto Sans Mono CJK SC", "Liberation Sans", "Noto Sans CJK SC", sans-serif;
}

.dialog-status span {
  height: 20px;
}

.dialog-status .coords {
  width: 147px;
  padding-left: 8px;
}

.dialog-status .hint {
  flex: 1;
  margin-right: -16px;
}

.floater {
  position: absolute;
  left: 557px;
  top: 210px;
  width: 200px;
  padding-top: 7px;
  border: 1px solid #444;
  background: #fff;
  box-shadow: 0 0 2px #888;
}

.floater h2 {
  height: 21px;
  padding-left: 2px;
  line-height: 20px;
  background: #a0a0a0;
  color: #fff;
}

.floater-tools {
  display: flex;
  align-items: center;
  gap: 10px;
  height: 27px;
  padding-left: 5px;
  background: linear-gradient(#fafafa, #f0f0f0);
}

.combo.plain {
  width: 57px;
  height: 23px;
  margin-left: -5px;
  padding-right: 2px;
  border-color: #7a7a7a;
  background: #f3f3f3;
}

.plain .caret {
  border-top-color: #777;
}

.markup {
  position: absolute;
  left: 585px;
  top: 225px;
  pointer-events: none;
}

.ime-bar {
  position: absolute;
  right: 0;
  bottom: 40px;
  display: flex;
  align-items: center;
  gap: 6px;
  height: 24px;
  padding-right: 4px;
  border: 1px solid #bcd0ea;
  background: #fbfdff;
}

.sogou {
  margin: -3px -2px 0 -2px;
}

.ime-zh {
  color: #1a72c8;
  font-size: 15px;
  font-weight: 700;
}

.speed-ball {
  position: absolute;
  right: 137px;
  top: -29px;
  width: 48px;
  height: 48px;
  border: 2px solid #ddd;
  border-radius: 50%;
  background: radial-gradient(#52d46a, #36bb52);
  box-shadow: 0 2px 6px #666;
  color: #fff;
  font-weight: 700;
  line-height: 68px;
  text-align: center;
}
</style>
